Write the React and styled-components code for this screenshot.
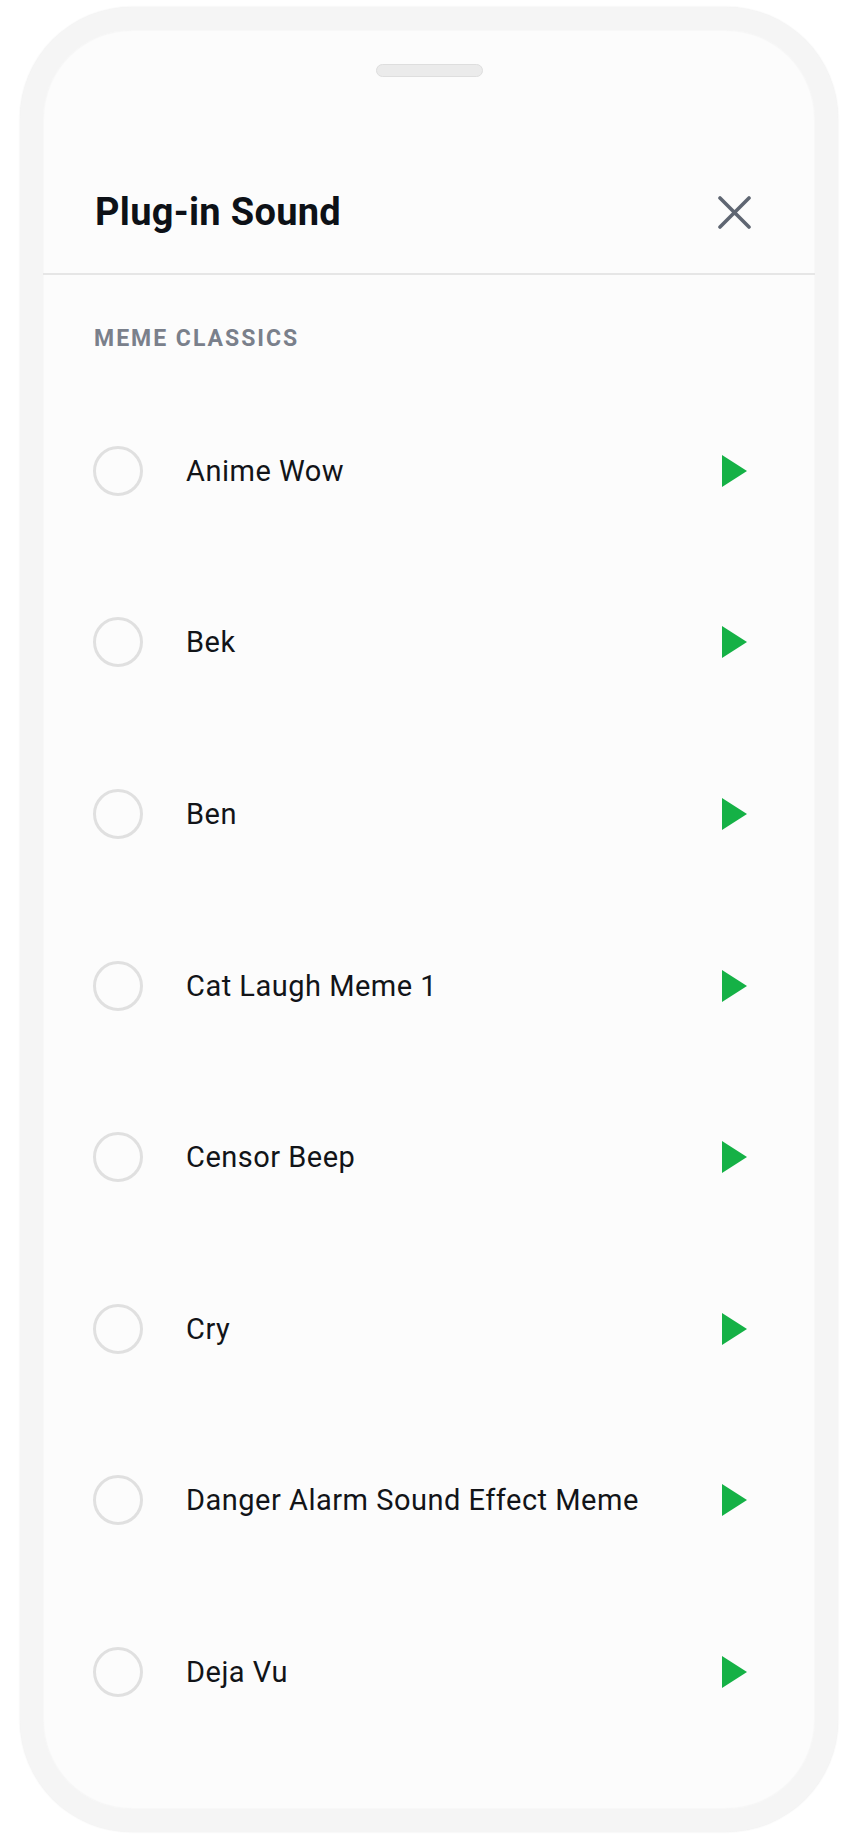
import React, { useState } from 'react';
import styled, { createGlobalStyle } from 'styled-components';

const GlobalStyle = createGlobalStyle`
	body {
		margin: 0;
		background: #ffffff;
		font-family: Roboto, "Noto Sans", sans-serif;
	}
`;

const Page = styled.div`
	padding: 7px 16px 10px 20px;
`;

const Phone = styled.div`
	box-sizing: border-box;
	width: 818px;
	height: 1825px;
	border: 23px solid #f5f5f5;
	border-radius: 112px;
	background: #fcfcfc;
	box-shadow: 0 0 2px rgba(0, 0, 0, 0.09), inset 0 0 2px rgba(0, 0, 0, 0.07);
	overflow: hidden;
	display: flex;
	flex-direction: column;
`;

const Handle = styled.div`
	align-self: center;
	width: 107px;
	height: 13px;
	margin-top: 34px;
	box-sizing: border-box;
	border-radius: 7px;
	background: #ebebeb;
	border: 1px solid #dedede;
`;

const Header = styled.div`
	display: flex;
	align-items: center;
	justify-content: space-between;
	height: 46px;
	padding: 112px 64px 38px 52px;
	border-bottom: 2px solid #e6e6e6;
`;

const Title = styled.h1`
	margin: 0;
	font-size: 38px;
	line-height: 46px;
	font-weight: 700;
	letter-spacing: 0.3px;
	color: #0d1117;
`;

const CloseButton = styled.button`
	width: 33px;
	height: 33px;
	padding: 0;
	border: none;
	background: none;
	cursor: pointer;
	display: flex;
`;

const SectionLabel = styled.div`
	margin: 50px 0 32px 51px;
	font-size: 23px;
	line-height: 28px;
	font-weight: 700;
	letter-spacing: 2px;
	color: #7a808b;
`;

const Row = styled.div`
	display: flex;
	align-items: center;
	height: 171.6px;
	padding: 0 68px 0 50px;
	flex-shrink: 0;
	cursor: pointer;
`;

const Radio = styled.div`
	box-sizing: border-box;
	width: 50px;
	height: 50px;
	border-radius: 50%;
	border: 3px solid ${props => (props.checked ? '#15b146' : '#e0e0e0')};
	flex-shrink: 0;
`;

const Name = styled.span`
	flex: 1;
	margin-left: 43px;
	font-size: 29px;
	letter-spacing: 0.5px;
	color: #121418;
`;

const PlayButton = styled.button`
	width: 25px;
	height: 32px;
	padding: 0;
	border: none;
	background: none;
	display: flex;
	cursor: pointer;
`;

const sounds = [
	'Anime Wow',
	'Bek',
	'Ben',
	'Cat Laugh Meme 1',
	'Censor Beep',
	'Cry',
	'Danger Alarm Sound Effect Meme',
	'Deja Vu',
];

const App = () => {
	const [selected, setSelected] = useState(null);

	return (
		<Page>
			<GlobalStyle />
			<Phone>
				<Handle />
				<Header>
					<Title>Plug-in Sound</Title>
					<CloseButton aria-label="Close">
						<svg width="33" height="33" viewBox="0 0 33 33">
							<path d="M2 2 L31 31 M31 2 L2 31" stroke="#5f6672" strokeWidth="3.6" strokeLinecap="round" />
						</svg>
					</CloseButton>
				</Header>
				<SectionLabel>MEME CLASSICS</SectionLabel>
				{sounds.map(name => (
					<Row key={name} onClick={() => setSelected(name)}>
						<Radio checked={selected === name} />
						<Name>{name}</Name>
						<PlayButton aria-label={`Play ${name}`}>
							<svg width="25" height="32" viewBox="0 0 25 32">
								<polygon points="0,0 25,16 0,32" fill="#15b146" />
							</svg>
						</PlayButton>
					</Row>
				))}
			</Phone>
		</Page>
	);
};

export default App;
